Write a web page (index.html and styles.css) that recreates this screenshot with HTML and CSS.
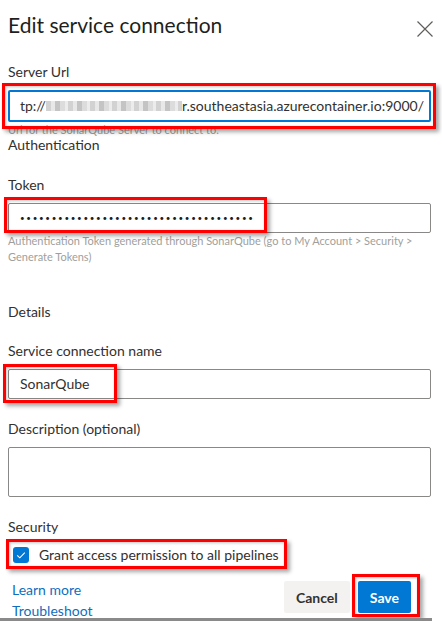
FILE: index.html
```html
<!DOCTYPE html>
<html lang="en">
<head>
    <meta charset="UTF-8">
    <meta name="viewport" content="width=device-width, initial-scale=1.0">
    <title>Edit service connection</title>
    <link rel="stylesheet" href="styles.css">
</head>
<body>
    <div class="dialog">
        <header class="head">
            <h1>Edit service connection</h1>
            <button class="close" aria-label="Close">
                <svg width="16" height="16" viewBox="0 0 16 16">
                    <path d="M0.5 0.5 L15.5 15.5 M15.5 0.5 L0.5 15.5" stroke="#605e5c" stroke-width="1.2" fill="none"/>
                </svg>
            </button>
        </header>

        <div class="field field-url">
            <label class="label">Server Url</label>
            <div class="box">
                <div class="input input-focus">
                    <span>tp://</span><span class="blur"></span><span>r.southeastasia.azurecontainer.io:9000/</span>
                </div>
                <span class="mark mark-url"></span>
            </div>
            <p class="hint">Url for the SonarQube Server to connect to.</p>
        </div>

        <div class="section section-auth">Authentication</div>

        <div class="field field-token">
            <label class="label">Token</label>
            <div class="box">
                <div class="input dots">•••••••••••••••••••••••••••••••••••••</div>
                <span class="mark mark-token"></span>
            </div>
            <p class="hint">Authentication Token generated through SonarQube (go to My Account &gt; Security &gt; Generate Tokens)</p>
        </div>

        <div class="section section-details">Details</div>

        <div class="field field-name">
            <label class="label">Service connection name</label>
            <div class="box">
                <div class="input">SonarQube</div>
                <span class="mark mark-name"></span>
            </div>
        </div>

        <div class="field field-desc">
            <label class="label">Description (optional)</label>
            <div class="input textarea"></div>
        </div>

        <div class="section section-security">Security</div>

        <div class="check-row">
            <span class="checkbox">
                <svg width="16" height="16" viewBox="0 0 16 16">
                    <path d="M4.2 8.3 L6.8 10.8 L11.8 5.6" stroke="#ffffff" stroke-width="1.1" fill="none"/>
                </svg>
            </span>
            <span>Grant access permission to all pipelines</span>
            <span class="mark mark-check"></span>
        </div>

        <footer class="footer">
            <div class="links">
                <a href="#">Learn more</a>
                <a href="#">Troubleshoot</a>
            </div>
            <div class="buttons">
                <button class="btn btn-cancel">Cancel</button>
                <span class="box">
                    <button class="btn btn-save">Save</button>
                    <span class="mark mark-save"></span>
                </span>
            </div>
        </footer>

        <div class="frame-edge"></div>
    </div>
</body>
</html>
```
FILE: styles.css
```css
body {
    margin: 0;
    background-color: #ffffff;
    font-family: Lato, "Open Sans", sans-serif;
    color: #323130;
    overflow: hidden;
}
.dialog {
    position: relative;
    display: flex;
    flex-direction: column;
    padding-left: 8px;
    width: 423px;
    height: 621px;
}
.head {
    display: flex;
    justify-content: space-between;
    align-items: flex-start;
    padding-top: 11px;
}
h1 {
    margin: 0;
    font-size: 21px;
    line-height: 28px;
    font-weight: 400;
    color: #201f1e;
}
.close {
    margin: 10px -2px 0 0;
    padding: 0;
    border: none;
    background: none;
    width: 16px;
    height: 16px;
}
.label {
    display: block;
    font-size: 14px;
    line-height: 20px;
    margin-bottom: 8px;
}
.box {
    position: relative;
    display: block;
}
.input {
    box-sizing: border-box;
    height: 30px;
    border: 1px solid #8a8886;
    border-radius: 2px;
    padding: 0 11px;
    font-size: 14px;
    line-height: 28px;
    color: #323130;
    white-space: nowrap;
    overflow: hidden;
}
.input-focus {
    height: 32px;
    border: 2px solid #0078d4;
    line-height: 28px;
    padding: 0 10px;
}
.blur {
    display: inline-block;
    vertical-align: middle;
    width: 136px;
    height: 10px;
    margin-top: -3px;
    background: repeating-linear-gradient(90deg, #d2d2d2 0 5px, #e8e8e8 5px 9px, #c4c4c4 9px 14px, #dcdcdc 14px 19px, #ececec 19px 22px);
}
.dots {
    letter-spacing: 1.7px;
    font-size: 8px;
    color: #201f1e;
}
.textarea {
    height: 50px;
}
.hint {
    margin: 0;
    font-size: 11px;
    line-height: 16px;
    color: #a19f9d;
    padding-right: 10px;
}
.section {
    font-size: 14px;
    line-height: 20px;
}
.field-url {
    margin-top: 23px;
}
.section-auth {
    margin-top: -3px;
}
.field-token {
    margin-top: 20px;
}
.section-details {
    margin-top: 37px;
}
.field-name {
    margin-top: 19px;
}
.field-desc {
    margin-top: 20px;
}
.section-security {
    margin-top: 20px;
}
.check-row {
    position: relative;
    display: flex;
    align-items: center;
    gap: 10px;
    margin-top: 8px;
    padding-left: 5px;
    font-size: 14px;
    line-height: 20px;
}
.checkbox {
    display: block;
    width: 16px;
    height: 16px;
    border-radius: 3px;
    background-color: #0078d4;
}
.checkbox svg {
    display: block;
}
.footer {
    display: flex;
    justify-content: space-between;
    align-items: flex-start;
    margin-top: 15px;
    padding-right: 20px;
}
.links {
    display: flex;
    flex-direction: column;
    gap: 1px;
    padding-left: 4px;
}
.links a {
    font-size: 14px;
    line-height: 20px;
    color: #106ebe;
    text-decoration: none;
}
.buttons {
    display: flex;
    gap: 8px;
    margin-top: 1px;
}
.btn {
    height: 32px;
    padding: 0 12px;
    border: none;
    border-radius: 2px;
    font-family: Lato, "Open Sans", sans-serif;
    font-size: 14px;
    font-weight: 700;
}
.btn-cancel {
    background-color: #f3f2f1;
    color: #323130;
}
.btn-save {
    display: block;
    background-color: #0078d4;
    color: #ffffff;
}
/* red screenshot marks */
.mark {
    position: absolute;
    border: 3px solid #ff0000;
    box-shadow: 3px 3px 4px rgba(0, 0, 0, 0.35), inset 1px 1px 3px rgba(0, 0, 0, 0.25);
    pointer-events: none;
}
.mark-url {
    left: -6px;
    top: -7px;
    right: -5px;
    bottom: -7px;
}
.mark-token {
    left: -4px;
    top: -6px;
    width: 257px;
    height: 30px;
}
.mark-name {
    left: -5px;
    top: -5px;
    width: 108px;
    height: 33px;
}
.mark-check {
    left: -2px;
    top: -6px;
    width: 275px;
    height: 24px;
}
.mark-save {
    left: -6px;
    top: -7px;
    width: 62px;
    height: 37px;
}
.frame-edge {
    position: absolute;
    left: 0;
    top: 618px;
    width: 432px;
    height: 3px;
    background-color: #8a8a8a;
}
```
